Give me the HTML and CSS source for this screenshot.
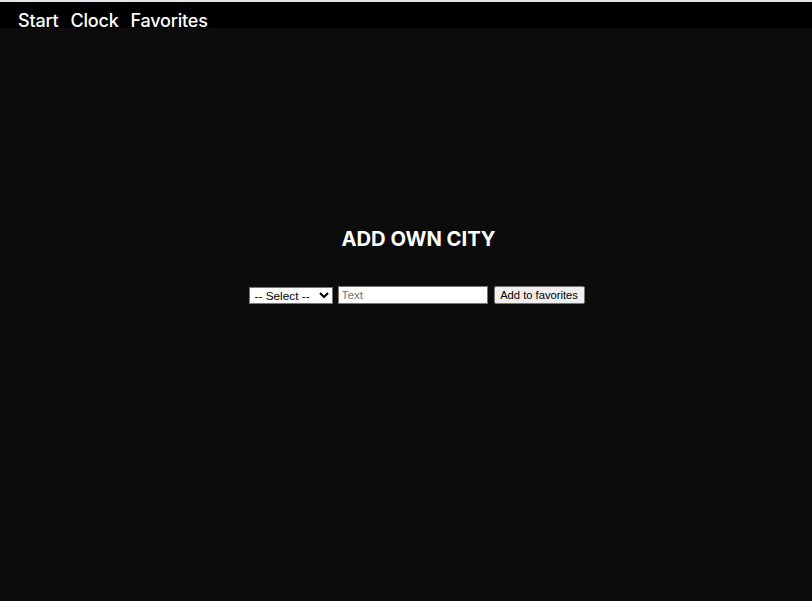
FILE: index.html
```html
<!DOCTYPE html>
<html lang="en">
<head>
<meta charset="utf-8">
<title>Add own city</title>
<link rel="stylesheet" href="styles.css">
</head>
<body>
<header class="topbar">
  <nav class="nav">
    <a class="nav-link" href="#">Start</a>
    <a class="nav-link" href="#">Clock</a>
    <a class="nav-link" href="#">Favorites</a>
  </nav>
</header>
<main class="main">
  <h1 class="title">ADD OWN CITY</h1>
  <form class="city-form">
    <select class="city-select">
      <option>-- Select --</option>
    </select>
    <input class="city-input" type="text" placeholder="Text">
    <button class="city-button" type="button">Add to favorites</button>
  </form>
</main>
</body>
</html>
```
FILE: styles.css
```css
html, body {
  margin: 0;
  padding: 0;
  background: #0c0c0c;
  height: 100%;
}
body {
  font-family: Inter, "Noto Sans", sans-serif;
  color: #fff;
  border-top: 2px solid #e6e6e6;
  box-sizing: border-box;
}
.topbar {
  background: #000;
  height: 26px;
}
.nav {
  display: flex;
  gap: 12px;
  padding-left: 18px;
  height: 100%;
}
.nav-link {
  color: #fff;
  text-decoration: none;
  font-size: 18px;
  font-weight: 500;
  letter-spacing: -0.2px;
  line-height: 20px;
  padding-top: 9px;
}
.main {
  display: flex;
  flex-direction: column;
  align-items: center;
  padding-top: 199px;
  padding-left: 25px;
}
.title {
  margin: 0;
  font-size: 20.2px;
  font-weight: 700;
  line-height: 24px;
}
.city-form {
  display: flex;
  align-items: center;
  margin-top: 35px;
  margin-right: 4px;
}
.city-select {
  font-family: Arial, "Liberation Sans", sans-serif;
  font-size: 11.8px;
  width: 84px;
  height: 17px;
  padding: 0 0 0 1px;
  box-sizing: border-box;
  background: #fff;
  color: #000;
}
.city-input {
  font-family: Arial, "Liberation Sans", sans-serif;
  font-size: 11.8px;
  width: 150px;
  height: 18px;
  box-sizing: border-box;
  padding: 1px 3px;
  margin: 0 0 0 5px;
  border: 1px solid #767676;
}
.city-button {
  font-family: Arial, "Liberation Sans", sans-serif;
  font-size: 11.2px;
  color: #000;
  width: 91px;
  margin: 0 0 0 6px;
  height: 18px;
  padding: 0;
  line-height: 14px;
  background: #efefef;
  border: 1px solid #767676;
  border-radius: 2px;
}
```
